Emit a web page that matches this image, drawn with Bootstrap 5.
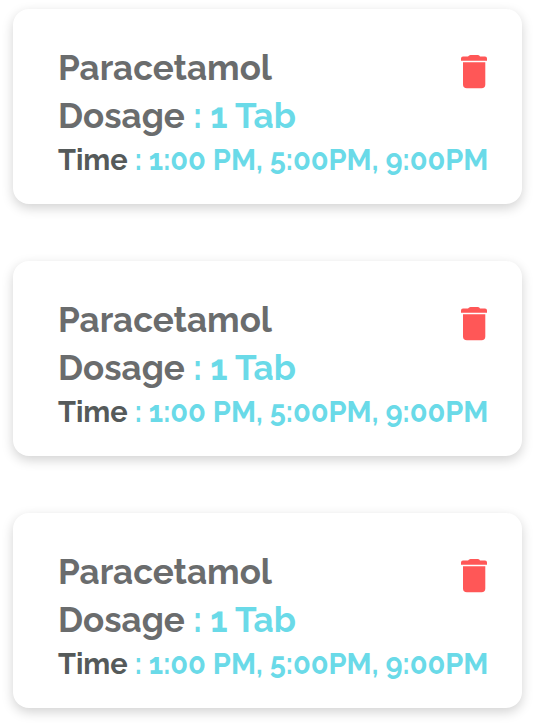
<!DOCTYPE html>
<html lang="en">
<head>
<meta charset="utf-8">
<meta name="viewport" content="width=device-width, initial-scale=1">
<title>Medication reminders</title>
<link href="https://cdn.jsdelivr.net/npm/bootstrap@5.3.0/dist/css/bootstrap.min.css" rel="stylesheet">
<style>
  body { background: #fff; font-family: Raleway, Lato, "Open Sans", sans-serif; }
  .reminders { padding: 9px 14px 16px 13px; gap: 57px; }
  .reminder { border-radius: 16px; box-shadow: 0 4px 12px rgba(0, 0, 0, .18); }
  .reminder-body { padding: 35px 35px 23px 45px; }
  .med-name, .med-dosage { font-size: 35px; line-height: 48px; font-weight: 700; color: #6a6c6d; }
  .med-time { font-size: 29px; line-height: 41px; font-weight: 700; color: #555a5a; }
  .med-value { color: #6adae8; }
  .delete-btn { color: #ff5757; line-height: 0; margin-top: 11px; }
  .delete-btn svg { width: 26px; height: 34px; }
</style>
</head>
<body>
<main class="reminders d-flex flex-column">
  <article class="card reminder border-0">
    <div class="card-body reminder-body">
      <div class="d-flex justify-content-between align-items-start">
        <h2 class="med-name mb-0">Paracetamol</h2>
        <button type="button" class="btn p-0 border-0 delete-btn" aria-label="Delete Paracetamol"><svg viewBox="0 0 26 34" fill="currentColor" aria-hidden="true"><path d="M0 5.7V3.500Q0 1.500 2 1.500H7Q8 0 9.500 0H17Q18.500 0 19 1.500H24Q26 1.500 26 3.500V5.700ZM2 7.300H24.300V29.500Q24.300 33.300 20.500 33.300H6Q2 33.300 2 29.500Z"/></svg></button>
      </div>
      <p class="med-dosage mb-0">Dosage <span class="med-value">: 1 Tab</span></p>
      <p class="med-time text-nowrap mb-0">Time <span class="med-value">: 1:00 PM, 5:00PM, 9:00PM</span></p>
    </div>
  </article>
  <article class="card reminder border-0">
    <div class="card-body reminder-body">
      <div class="d-flex justify-content-between align-items-start">
        <h2 class="med-name mb-0">Paracetamol</h2>
        <button type="button" class="btn p-0 border-0 delete-btn" aria-label="Delete Paracetamol"><svg viewBox="0 0 26 34" fill="currentColor" aria-hidden="true"><path d="M0 5.7V3.500Q0 1.500 2 1.500H7Q8 0 9.500 0H17Q18.500 0 19 1.500H24Q26 1.500 26 3.500V5.700ZM2 7.300H24.300V29.500Q24.300 33.300 20.500 33.300H6Q2 33.300 2 29.500Z"/></svg></button>
      </div>
      <p class="med-dosage mb-0">Dosage <span class="med-value">: 1 Tab</span></p>
      <p class="med-time text-nowrap mb-0">Time <span class="med-value">: 1:00 PM, 5:00PM, 9:00PM</span></p>
    </div>
  </article>
  <article class="card reminder border-0">
    <div class="card-body reminder-body">
      <div class="d-flex justify-content-between align-items-start">
        <h2 class="med-name mb-0">Paracetamol</h2>
        <button type="button" class="btn p-0 border-0 delete-btn" aria-label="Delete Paracetamol"><svg viewBox="0 0 26 34" fill="currentColor" aria-hidden="true"><path d="M0 5.7V3.500Q0 1.500 2 1.500H7Q8 0 9.500 0H17Q18.500 0 19 1.500H24Q26 1.500 26 3.500V5.700ZM2 7.300H24.300V29.500Q24.300 33.300 20.500 33.300H6Q2 33.300 2 29.500Z"/></svg></button>
      </div>
      <p class="med-dosage mb-0">Dosage <span class="med-value">: 1 Tab</span></p>
      <p class="med-time text-nowrap mb-0">Time <span class="med-value">: 1:00 PM, 5:00PM, 9:00PM</span></p>
    </div>
  </article>
</main>
<script src="https://cdn.jsdelivr.net/npm/bootstrap@5.3.0/dist/js/bootstrap.bundle.min.js"></script>
</body>
</html>
